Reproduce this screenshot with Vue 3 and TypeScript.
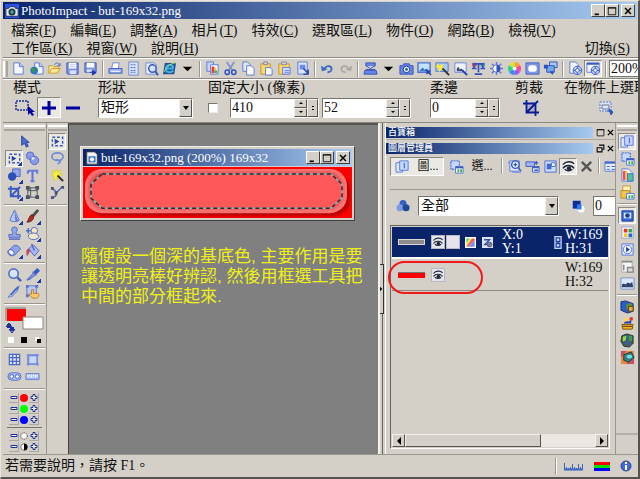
<script setup lang="ts">
import { ref } from 'vue'

interface Item { icon: string; label: string; pressed?: boolean }
interface MenuEntry { text: string; key: string }

const t = (icon: string, label: string, pressed = false): Item => ({ icon, label, pressed })

const menuTop: MenuEntry[] = [
  { text: '檔案', key: 'F' }, { text: '編輯', key: 'E' }, { text: '調整', key: 'A' },
  { text: '相片', key: 'T' }, { text: '特效', key: 'C' }, { text: '選取區', key: 'L' },
  { text: '物件', key: 'O' }, { text: '網路', key: 'B' }, { text: '檢視', key: 'V' },
]
const menuBottom: MenuEntry[] = [
  { text: '工作區', key: 'K' }, { text: '視窗', key: 'W' }, { text: '說明', key: 'H' },
]

const toolbar: Item[][] = [
  [t('page', 'New'), t('webpage', 'New web page'), t('open', 'Open'), t('save', 'Save'), t('saveas', 'Save as')],
  [t('print', 'Print'), t('sheet', 'Print preview'), t('preview', 'Preview'), t('browser', 'Browser'), t('down', 'Browser list')],
  [t('copyrgb', 'Copy image'), t('cut', 'Cut'), t('copy', 'Copy'), t('paste', 'Paste'), t('paste2', 'Paste special'), t('pasteimg', 'Paste image')],
  [t('undo', 'Undo'), t('redo', 'Redo')],
  [t('scan', 'Scanner'), t('down', 'Scanner list'), t('camera', 'Camera'), t('photo', 'Photo'), t('photofx', 'Photo effects'),
    t('histo', 'Levels'), t('balance', 'Balance'), t('bright', 'Brightness'), t('wheel', 'Hue'), t('frame', 'Frame'), t('batch', 'Batch')],
  [t('webdoc', 'Web document'), t('webwin', 'Web window', true)],
]

const toolGroups: Item[][] = [
  [t('marquee', 'Select', true), t('balls', 'Object'), t('shapes', 'Shapes'), t('type', 'Text'), t('crop', 'Crop'), t('transform', 'Transform')],
  [t('cone', 'Retouch'), t('brush', 'Paint'), t('stamp', 'Stamp'), t('clone', 'Clone'), t('eraser', 'Eraser'), t('bucket', 'Fill')],
  [t('lens', 'Zoom'), t('dropper', 'Eyedropper'), t('knife', 'Slice'), t('hand', 'Image map')],
]
const flyouts = ['marquee', 'shapes', 'crop', 'cone', 'brush', 'clone', 'eraser', 'bucket', 'dropper']
const viewTools: Item[] = [t('grid', 'Grid'), t('box', 'Bounds'), t('mask', 'Mask'), t('ruler', 'Ruler')]
const subTools: Item[] = [t('marquee', 'Standard selection', true), t('lasso', 'Lasso'), t('wand', 'Magic wand'), t('bezier', 'Bezier')]
const channels = ['red', 'green', 'blue']
const tones = ['sun', 'contrast']

const panelTools: Item[] = [t('docfind', 'Find'), t('objadd', 'Add'), t('objwin', 'Arrange'), t('eye', 'Show', true), t('cross', 'Delete')]
const strip: Item[][] = [
  [t('layers', 'Layers', true), t('selpanel', 'Selections'), t('colorpage', 'Channels'), t('lockpage', 'Documents')],
  [t('picpanel', 'Gallery', true), t('palette', 'Colors'), t('play', 'Quick commands'), t('textures', 'Info'), t('histogram', 'Histogram')],
  [t('lib', 'Library'), t('lamp', 'Genie'), t('globe', 'Material'), t('film', 'Effects')],
]

const width = ref('410')
const height = ref('52')
const soft = ref('0')
const zoom = ref('200%')
const opacity = ref('0')
const fixed = ref(false)
</script>

<template>
  <div class="app">
    <svg class="sprite" aria-hidden="true">
      <symbol id="page" viewBox="0 0 16 16"><path d="M3 2h6l4 4v8H3z" fill="#f4f7ff" stroke="#5a7ad8" /><path d="M9 2v4h4" fill="#b9c9f6" stroke="#5a7ad8" /></symbol>
      <symbol id="webpage" viewBox="0 0 16 16"><path d="M6 2h5l4 4v8H6z" fill="#f4f7ff" stroke="#5a7ad8" /><path d="M11 2v4h4" fill="#b9c9f6" stroke="#5a7ad8" /><circle cx="5.500" cy="10" r="4" fill="#2a70c8" /><path d="M2 9l3-2 2 2-2 4zM7 7l2 1v3z" fill="#36a040" /></symbol>
      <symbol id="open" viewBox="0 0 16 16"><path d="M2 13V5h4l1 1h5v3" fill="#f7e9a2" stroke="#c79a32" /><path d="M2 13l3-5h9l-3 5z" fill="#ffe58a" stroke="#c79a32" /><path d="M8 4c2-3 4-2 5 0M14 2v3h-3" fill="none" stroke="#3a66c8" /></symbol>
      <symbol id="save" viewBox="0 0 16 16"><path d="M2 2h12v12H3l-1-1z" fill="#7b93e4" stroke="#4158b8" /><path d="M4 2h8v6H4z" fill="#fff" /><path d="M5 4h6M5 6h6" stroke="#b8c4e8" /><path d="M5 10h7v4H5z" fill="#d9e0fa" /></symbol>
      <symbol id="saveas" viewBox="0 0 16 16"><path d="M2 2h12v10H2z" fill="#7b93e4" stroke="#4158b8" /><path d="M4 2h8v5H4z" fill="#fff" /><path d="M4 9h6v3H4z" fill="#d9e0fa" /><path d="M7 12h5M10 10l4 2.500-4 2.500z" fill="#2038b0" stroke="#2038b0" /></symbol>
      <symbol id="print" viewBox="0 0 16 16"><path d="M5 2h7l-1 6H4z" fill="#fff" stroke="#6c86dc" /><path d="M1 8h14v5H1z" fill="#9cb2f0" stroke="#3d5cc0" /><path d="M3 11h10" stroke="#fff" /></symbol>
      <symbol id="sheet" viewBox="0 0 16 16"><path d="M3 1h10v14H3z" fill="#dce5ff" stroke="#6c86dc" /><path d="M5 4h6M5 7h6M5 10h6M5 12h6" stroke="#3d5cc0" stroke-dasharray="2 1" /></symbol>
      <symbol id="preview" viewBox="0 0 16 16"><path d="M2 2h9l2 2v10H2z" fill="#eef2ff" stroke="#6c86dc" /><circle cx="9" cy="8" r="4" fill="#cfe4fb" stroke="#3558bd" stroke-width="1.500" /><path d="M12 11l3 4" stroke="#3558bd" stroke-width="2" /></symbol>
      <symbol id="browser" viewBox="0 0 16 16"><path d="M3 2h12l-2 12H1z" fill="#2a4a88" /><path d="M12 8H4c1-5 8-5 8 0M4 8c0 5 6 5 8 2" fill="none" stroke="#35b8f0" stroke-width="2" /><path d="M2 12C5 5 11 2 15 2" fill="none" stroke="#9fdc6c" /></symbol>
      <symbol id="down" viewBox="0 0 16 16"><path d="M3 6h10l-5 5z" fill="#000" /></symbol>
      <symbol id="copyrgb" viewBox="0 0 16 16"><path d="M2 1h7v10H2z" fill="#c9d7ff" stroke="#5a7ad8" /><path d="M6 4h8v10H6z" fill="#fff" stroke="#5a7ad8" /><path d="M7 6h3v7H7z" fill="#e83a3a" /><path d="M10 7h2v3h-2z" fill="#f0c430" /><path d="M10 10h3v3h-3z" fill="#40b050" /></symbol>
      <symbol id="cut" viewBox="0 0 16 16"><path d="M4 1l6 9M12 1L6 10" stroke="#8296c8" stroke-width="2" /><circle cx="4.500" cy="12" r="2.300" fill="none" stroke="#2d54c0" stroke-width="1.600" /><circle cx="11.500" cy="12" r="2.300" fill="none" stroke="#2d54c0" stroke-width="1.600" /></symbol>
      <symbol id="copy" viewBox="0 0 16 16"><path d="M2 1h5l3 3v7H2z" fill="#dfe8ff" stroke="#5a7ad8" /><path d="M6 5h5l3 3v7H6z" fill="#f7f9ff" stroke="#5a7ad8" /></symbol>
      <symbol id="paste" viewBox="0 0 16 16"><path d="M2 3h10v11H2z" fill="#ffd865" stroke="#c2932c" /><path d="M5 1h4v3H5z" fill="#d0d4e4" stroke="#8088a0" /><path d="M7 7h5l2 2v6H7z" fill="#f7f9ff" stroke="#5a7ad8" /></symbol>
      <symbol id="paste2" viewBox="0 0 16 16"><path d="M2 3h11v11H2z" fill="#ffd865" stroke="#c2932c" /><path d="M5 1h5v3H5z" fill="#d0d4e4" stroke="#8088a0" /><path d="M6 7h8v7H6z" fill="#dce5ff" stroke="#5a7ad8" /><path d="M8 10h5M8 12h5" stroke="#5a7ad8" /></symbol>
      <symbol id="pasteimg" viewBox="0 0 16 16"><path d="M3 1h10v13H3z" fill="#dce5ff" stroke="#5a7ad8" /><path d="M5 4h6v5H5z" fill="#6f8ce4" /><path d="M9 8l5 5M14 9v5H9" stroke="#2038b0" stroke-width="1.500" fill="none" /></symbol>
      <symbol id="undo" viewBox="0 0 16 16"><path d="M5 8c2-4 9-3 7 2-1 2-2 2-4 2" fill="none" stroke="#3b69c8" stroke-width="2" /><path d="M1 5l1 6 6-2z" fill="#3b69c8" /></symbol>
      <symbol id="redo" viewBox="0 0 16 16"><path d="M11 8c-2-4-9-3-7 2 1 2 2 2 4 2" fill="none" stroke="#aaa9a5" stroke-width="2" /><path d="M15 5l-1 6-6-2z" fill="#aaa9a5" /></symbol>
      <symbol id="scan" viewBox="0 0 16 16"><path d="M3 2h10v3H3zM2 10h12l1 4H1z" fill="#6687e8" stroke="#3450b8" /><path d="M3 5l5 3 5-3M3 9h10" stroke="#3450b8" fill="#c5d5ff" /></symbol>
      <symbol id="camera" viewBox="0 0 16 16"><path d="M1 5h3l1-2h6l1 2h3v9H1z" fill="#6687e8" stroke="#3450b8" /><circle cx="8" cy="9" r="3.500" fill="#e5f0ff" stroke="#203880" /><circle cx="8" cy="9" r="1.500" fill="#2d54c0" /></symbol>
      <symbol id="photo" viewBox="0 0 16 16"><path d="M1 2h13v10H1z" fill="#bfe2ff" stroke="#4e70d0" stroke-width="1.500" /><path d="M2 11l4-4 3 3 2-2 2 3z" fill="#3c78c8" /><path d="M9 9l6 6M10 14l4-4" stroke="#2038b0" stroke-width="1.500" /></symbol>
      <symbol id="photofx" viewBox="0 0 16 16"><path d="M1 2h13v9H1z" fill="#a5cbf7" stroke="#4e70d0" /><path d="M3 2l2 3 4-2-1 4 4 3-5-1-3 3V8L1 6z" fill="#ffe92e" /><path d="M8 8l7 7" stroke="#303040" stroke-width="2" /></symbol>
      <symbol id="histo" viewBox="0 0 16 16"><path d="M2 2h12v10H2z" fill="#eef2ff" stroke="#6c86dc" /><path d="M4 11V8l2-2 1 3 2-1 3 3z" fill="#3d4c70" /><path d="M10 10l5 5" stroke="#2038b0" stroke-width="2" /></symbol>
      <symbol id="balance" viewBox="0 0 16 16"><path d="M1 2h5v4H1z" fill="#e25268" /><path d="M10 2h5v4h-5z" fill="#3cb9a0" /><path d="M2 3h12M8 2v10M4 14h8M1 8h5M10 8h5M3 8l1-5M13 8l-1-5" stroke="#3450b8" stroke-width="1.800" /></symbol>
      <symbol id="bright" viewBox="0 0 16 16"><path d="M8 1v14M1 8h14M3 3l10 10M13 3L3 13" stroke="#5877da" stroke-width="1.500" /><circle cx="8" cy="8" r="4" fill="#f4f8ff" stroke="#5877da" /><path d="M8 4a4 4 0 0 1 0 8z" fill="#3450b8" /></symbol>
      <symbol id="wheel" viewBox="0 0 16 16"><path d="M8 8V1a7 7 0 0 1 6 3.500z" fill="#ff9b38" /><path d="M8 8l6-3.500a7 7 0 0 1 0 7z" fill="#f3469b" /><path d="M8 8l6 3.500A7 7 0 0 1 8 15z" fill="#9c5af0" /><path d="M8 8v7a7 7 0 0 1-6-3.500z" fill="#3a8cf5" /><path d="M8 8l-6 3.500a7 7 0 0 1 0-7z" fill="#2cd486" /><path d="M8 8L2 4.500A7 7 0 0 1 8 1z" fill="#c9e838" /><circle cx="8" cy="8" r="2" fill="#fff" /></symbol>
      <symbol id="frame" viewBox="0 0 16 16"><path d="M1 2h14v12H1z" fill="#7d97ea" stroke="#4561c5" /><rect x="3.500" y="4.500" width="9" height="7" rx="3" fill="#fff" /></symbol>
      <symbol id="batch" viewBox="0 0 16 16"><path d="M7 1h8v6H7z" fill="#a5cbf7" stroke="#3450b8" /><path d="M4 5h8v7H4z" fill="#70a8f0" stroke="#3450b8" /><path d="M1 4h4v4H1zM7 11h5l-2 4z" fill="#2850c0" /></symbol>
      <symbol id="webdoc" viewBox="0 0 16 16"><path d="M2 1h6l3 3v9H2z" fill="#f4f7ff" stroke="#5a7ad8" /><circle cx="10" cy="10" r="4.500" fill="#c5d5ff" stroke="#3d5cc0" /><circle cx="10" cy="10" r="2" fill="#fff" stroke="#3d5cc0" /><path d="M5.500 10H8M12 10h2.500M10 5.500V8M10 12v2.500" stroke="#3d5cc0" /></symbol>
      <symbol id="webwin" viewBox="0 0 16 16"><path d="M1 2h13v10H1z" fill="#f4f7ff" stroke="#5a7ad8" /><path d="M1 3h13" stroke="#3d5cc0" stroke-width="2" /><circle cx="10" cy="10" r="4.500" fill="#c5d5ff" stroke="#3d5cc0" /><circle cx="10" cy="10" r="2" fill="#fff" stroke="#3d5cc0" /><path d="M5.500 10H8M12 10h2.500M10 5.500V8M10 12v2.500" stroke="#3d5cc0" /></symbol>

      <symbol id="pointer" viewBox="0 0 16 16"><path d="M5 2v10l3-2 2 4 2-1-2-4h3z" fill="#4a6cd0" stroke="#27459c" /></symbol>
      <symbol id="marquee" viewBox="0 0 16 16"><path d="M2.500 3.500h11v9h-11z" fill="none" stroke="#3a58b8" stroke-width="1.500" stroke-dasharray="3 2" /><path d="M5 5l5 3-5 3z" fill="#27459c" /></symbol>
      <symbol id="balls" viewBox="0 0 16 16"><circle cx="5.500" cy="5" r="4" fill="#8a9ce8" stroke="#5166c4" /><circle cx="10" cy="10" r="4.500" fill="#8a9ce8" stroke="#5166c4" /><circle cx="8.500" cy="8" r="1.500" fill="#dfe5ff" /></symbol>
      <symbol id="shapes" viewBox="0 0 16 16"><path d="M6 1h8v8H6z" fill="#8fa4ec" stroke="#5166c4" /><circle cx="5.500" cy="9" r="4.500" fill="#2f4fb8" /></symbol>
      <symbol id="type" viewBox="0 0 16 16"><path d="M3 3h10v3M8 3v11M3 3v3M6 14h4" fill="none" stroke="#6079dc" stroke-width="2.200" /></symbol>
      <symbol id="crop" viewBox="0 0 16 16"><path d="M4 1v11h11M1 4h11v11M4 12l10-10" fill="none" stroke="#3a58c8" stroke-width="2" /></symbol>
      <symbol id="transform" viewBox="0 0 16 16"><path d="M3 3h10v10H3zM3 6h10M6 3v10" fill="none" stroke="#4b4f60" /><path d="M1 1h4v4H1zM11 1h4v4h-4zM1 11h4v4H1zM11 11h4v4h-4z" fill="#4b4f60" /></symbol>
      <symbol id="cone" viewBox="0 0 16 16"><path d="M8 1l5 11c-2 2-8 2-10 0z" fill="#b8c8f8" stroke="#5a73cc" /><path d="M8 3l1 10h3z" fill="#5c7bdc" /></symbol>
      <symbol id="brush" viewBox="0 0 16 16"><path d="M14 1L8 8" stroke="#505050" stroke-width="3" /><path d="M9 7c1 5-3 7-7 7 2-2 2-6 5-8z" fill="#a52f24" stroke="#641c18" /></symbol>
      <symbol id="stamp" viewBox="0 0 16 16"><path d="M5 4a3 3 0 0 1 6 0c0 2-2 2-1 5h4v3H2V9h4c1-3-1-3-1-5z" fill="#92a6ea" stroke="#5166c4" /><path d="M2 14h12" stroke="#5166c4" stroke-width="1.500" /></symbol>
      <symbol id="clone" viewBox="0 0 16 16"><circle cx="10" cy="5" r="3.500" fill="#f4e6c0" stroke="#5166c4" /><ellipse cx="9" cy="11" rx="5.500" ry="3.500" fill="#f1e8cc" stroke="#5166c4" /><path d="M1 5h5M3.500 2v6" stroke="#4c6bd0" stroke-width="1.500" /></symbol>
      <symbol id="eraser" viewBox="0 0 16 16"><path d="M1 9l6-6c3-2 8 2 7 4l-6 6c-3 2-8-1-7-4z" fill="#8fa4ec" stroke="#5166c4" /><ellipse cx="4.500" cy="10" rx="3.500" ry="2.500" fill="#f4f6ff" stroke="#5166c4" transform="rotate(40 4.500 10)" /></symbol>
      <symbol id="bucket" viewBox="0 0 16 16"><path d="M4 6l5-4 6 6-5 6z" fill="#a6b7f0" stroke="#5166c4" /><path d="M7 1l3 7" stroke="#5166c4" stroke-width="1.500" /><path d="M4 6c-3 0-3 4-2 8 2-1 2-5 4-5z" fill="#b5505c" /></symbol>
      <symbol id="lens" viewBox="0 0 16 16"><circle cx="7" cy="7" r="5" fill="#d4e5fb" stroke="#5a73cc" stroke-width="1.800" /><path d="M11 11l4 4" stroke="#4460c0" stroke-width="2.500" /></symbol>
      <symbol id="dropper" viewBox="0 0 16 16"><path d="M9 6l4-4 2 2-4 4" fill="#3a58c8" stroke="#3a58c8" stroke-width="1.500" /><path d="M8 5l4 4M9 7l-7 7 3-1 6-5" fill="#dbe6ff" stroke="#5a73cc" stroke-width="1.500" /></symbol>
      <symbol id="knife" viewBox="0 0 16 16"><path d="M8 6l6-5-3 7z" fill="#5a73cc" /><path d="M9 5L1 14c5 0 7-3 10-7z" fill="#dfe4f6" stroke="#5a73cc" /><path d="M12 3L4 12" stroke="#4b68c8" stroke-width="2" /></symbol>
      <symbol id="hand" viewBox="0 0 16 16"><path d="M2 2h10v10H2z" fill="#b9c8fa" stroke="#5a73cc" /><path d="M1 1h3v3H1zM11 1h3v3h-3zM1 11h3v3H1z" fill="#5a73cc" /><path d="M7 6h2v4h5c2 2 0 5-2 5H8l-4-4 2-1 1 1z" fill="#fac96a" stroke="#b87c2c" /></symbol>
      <symbol id="grid" viewBox="0 0 16 16"><path d="M2.500 2.500h11v11h-11zM6 2v12M10 2v12M2 6h12M2 10h12" fill="#dbe6ff" stroke="#4a66c8" stroke-width="1.300" /></symbol>
      <symbol id="box" viewBox="0 0 16 16"><path d="M4 4h9v9H4z" fill="#c7d7ff" stroke="#5a73cc" /><path d="M2 3h13M2 13h13M3 2v13M13 2v13" stroke="#6f88e0" stroke-width="1.300" /></symbol>
      <symbol id="mask" viewBox="0 0 16 16"><rect x="1" y="4" width="14" height="8" rx="4" fill="#a9baf2" stroke="#5a73cc" /><circle cx="5" cy="8" r="2" fill="#fff" stroke="#4560b8" /><circle cx="11" cy="8" r="2" fill="#fff" stroke="#4560b8" /></symbol>
      <symbol id="ruler" viewBox="0 0 16 16"><path d="M1 5h14v6H1z" fill="#b5c6fa" stroke="#5a73cc" /><path d="M3 6v3M5 6v2M7 6v3M9 6v2M11 6v3M13 6v2" stroke="#fff" /></symbol>
      <symbol id="lasso" viewBox="0 0 16 16"><ellipse cx="8" cy="6" rx="6" ry="4" fill="none" stroke="#7189d8" stroke-width="1.800" /><path d="M11 9c1 2-1 4-3 5M6 9l5 2" fill="none" stroke="#7189d8" stroke-width="1.600" /></symbol>
      <symbol id="wand" viewBox="0 0 16 16"><path d="M7 1l1 3 4-2-2 4 4 1-4 2 1 4-4-2-3 3V9L1 8l3-2-2-4 4 2z" fill="#f8ef35" stroke="#c8b830" stroke-width=".5" /><path d="M8 8l6 6" stroke="#282838" stroke-width="2" /></symbol>
      <symbol id="bezier" viewBox="0 0 16 16"><path d="M2 3l5 5 6-6M7 8c0 4-2 5-4 5" fill="none" stroke="#4b5dac" stroke-width="1.500" /><path d="M1 2h3v3H1zM12 1h3v3h-3zM5 7h3v3H5zM1 12h3v3H1z" fill="#4b5070" /></symbol>
      <symbol id="sun" viewBox="0 0 16 16"><circle cx="8" cy="8" r="7" fill="none" stroke="#555" stroke-width="2" stroke-dasharray="2 2.500" /><circle cx="8" cy="8" r="4.500" fill="#fff" /></symbol>
      <symbol id="contrast" viewBox="0 0 16 16"><circle cx="8" cy="8" r="6.500" fill="#fff" stroke="#000" /><path d="M8 1a7 7 0 0 1 0 14z" fill="#000" /></symbol>

      <symbol id="layers" viewBox="0 0 16 16"><path d="M1 4h7v10H1z" fill="#dce8ff" stroke="#5a78d8" /><path d="M5 2h9v10H5z" fill="#c6d8ff" stroke="#5a78d8" /><path d="M10 4v6" stroke="#5a78d8" stroke-width="1.500" /></symbol>
      <symbol id="selpanel" viewBox="0 0 16 16"><path d="M2 2h9v9H2z" fill="#c6d8ff" stroke="#5a78d8" stroke-width="1.500" stroke-dasharray="2 1" /><path d="M7 8h8v7H7z" fill="#fff" stroke="#5078d0" /><path d="M7 9h8" stroke="#3d5cc0" stroke-width="2" /><path d="M9 11h2v3H9zM12 11h2v3h-2z" fill="#3dae58" /></symbol>
      <symbol id="docfind" viewBox="0 0 16 16"><path d="M1 4h5v10h9" fill="#dce8ff" stroke="#5a78d8" /><path d="M3 2h10v11H3z" fill="#dce8ff" stroke="#5a78d8" /><circle cx="9" cy="6" r="4" fill="#e9f2ff" stroke="#3558bd" stroke-width="1.500" /><path d="M12 9l3 4M7 6h4M9 4v4" stroke="#3558bd" stroke-width="1.500" /></symbol>
      <symbol id="objadd" viewBox="0 0 16 16"><path d="M1 3h9v5H1z" fill="#9db2f2" stroke="#4560c0" /><path d="M8 8h7v6H8z" fill="#dce8ff" stroke="#4560c0" /><path d="M8 9h7M12 2v4M10 4h4M10 12h4" stroke="#3d5cc0" stroke-width="1.500" /></symbol>
      <symbol id="objwin" viewBox="0 0 16 16"><path d="M2 2h12v12H2z" fill="#cdddfd" stroke="#4f6dcf" /><path d="M4 5h5v6H4z" fill="#426bd2" /><path d="M9 4h4v4H9z" fill="#fff" stroke="#426bd2" /></symbol>
      <symbol id="eye" viewBox="0 0 16 16"><path d="M2 6c3-4 9-4 12-1M2 10c3-4 9-4 12 0M4 11c2 2 6 2 8 0" fill="none" stroke="#20283c" stroke-width="1.600" /><circle cx="8.500" cy="10" r="2.300" fill="#20283c" /></symbol>
      <symbol id="cross" viewBox="0 0 16 16"><path d="M3 3l10 10M13 3L3 13" stroke="#555" stroke-width="2.500" /></symbol>
      <symbol id="propwin" viewBox="0 0 16 16"><path d="M1 3h14v10H1z" fill="#e5edff" stroke="#5a78d8" /><path d="M1 4h14" stroke="#3d65d0" stroke-width="2" /><path d="M3 8h3M3 11h3M8 8h5M8 11h5" stroke="#3d65d0" /></symbol>
      <symbol id="blend" viewBox="0 0 16 16"><circle cx="8" cy="5" r="4" fill="#3560c8" /><circle cx="4.500" cy="10" r="4" fill="#7f9be0" /><circle cx="11.500" cy="10" r="4" fill="#214894" /></symbol>
      <symbol id="opac" viewBox="0 0 16 16"><circle cx="11.500" cy="11.500" r="4" fill="#fff" /><path d="M2 2h9v9H2z" fill="#0b2d9c" /><path d="M7 6h5v6H7z" fill="#2b7cf0" /></symbol>
      <symbol id="colorpage" viewBox="0 0 16 16"><path d="M2 1h7l4 4v9H2z" fill="#fff" stroke="#5a78d8" /><path d="M3 3h3v10H3z" fill="#f05050" /><path d="M6 3h2v10H6z" fill="#f4d43c" /><path d="M8 6h6v8H8z" fill="#50c0a0" stroke="#4070d0" /></symbol>
      <symbol id="lockpage" viewBox="0 0 16 16"><path d="M3 1h8v8H3z" fill="#fff1b8" stroke="#c89830" /><path d="M1 6h9v8H1z" fill="#f2c64e" stroke="#b88828" /><path d="M7 9h8v6H7z" fill="#fff" stroke="#5078d0" /><path d="M9 11h2v3H9zM12 11h2v3h-2z" fill="#3dae58" /></symbol>
      <symbol id="picpanel" viewBox="0 0 16 16"><path d="M2 3h12v11H2z" fill="#3869d8" stroke="#1e3d98" /><path d="M4 5h8v6H4z" fill="#d6ecff" /><circle cx="8" cy="8" r="2.500" fill="#1e3d98" /></symbol>
      <symbol id="palette" viewBox="0 0 16 16"><path d="M2 2h12v12H2z" fill="#fff" stroke="#8fa0d0" /><path d="M4 4h4v4H4z" fill="#e63628" /><path d="M9 4h4v4H9z" fill="#38a848" /><path d="M4 9h4v4H4z" fill="#f4c62c" /><path d="M9 9h4v4H9z" fill="#2a62d8" /></symbol>
      <symbol id="play" viewBox="0 0 16 16"><path d="M2 2h12v12H2z" fill="#dce8ff" stroke="#5a78d8" /><circle cx="8" cy="8" r="4.500" fill="#f5f8ff" stroke="#5a78d8" /><path d="M6.500 5l4 3-4 3z" fill="#1e3d98" /></symbol>
      <symbol id="textures" viewBox="0 0 16 16"><path d="M2 2h11v12H2z" fill="#f5f5f3" stroke="#aaa" /><path d="M2 3h11M8 9h6v5H8zM4 6v6" fill="#ddd" stroke="#888" stroke-width="1.500" /></symbol>
      <symbol id="histogram" viewBox="0 0 16 16"><path d="M1 2h14v12H1z" fill="#dce8ff" stroke="#7a8ec8" /><path d="M2 12V9l2-1 2 1 2-2 3 1 2-2 1 6z" fill="#30426e" /></symbol>
      <symbol id="lib" viewBox="0 0 16 16"><path d="M1 3l5-1 8 3v8l-6 2-7-3z" fill="#2d5dc0" stroke="#1a2f78" /><circle cx="10" cy="8" r="3.500" fill="#5b8f40" /><path d="M9 8h5v5H9z" fill="#e2b23a" stroke="#604010" /></symbol>
      <symbol id="lamp" viewBox="0 0 16 16"><path d="M2 9h12l-1 5H3z" fill="#f0b52a" stroke="#80500c" /><path d="M4 8l2-4 3 2 3-2v4z" fill="#2c3fa8" /><circle cx="12" cy="3" r="2" fill="#e83828" /><circle cx="6" cy="4" r="2.200" fill="#ffd850" /><path d="M3 11h10" stroke="#503008" /></symbol>
      <symbol id="globe" viewBox="0 0 16 16"><path d="M2 3l5-2 7 2v8l-4 4-6-1-3-5z" fill="#47604c" stroke="#273040" /><path d="M3 4l4-1-1 5-3 1z" fill="#8ce03c" /><path d="M9 3h4v5l-3 1z" fill="#3ea04a" /><path d="M8 9V3M8 9l4 4M8 9l-4 3" stroke="#3858c8" stroke-width="1.500" /></symbol>
      <symbol id="film" viewBox="0 0 16 16"><path d="M1 1h14v14H1z" fill="#e98a36" /><path d="M1 1h6L1 8zM15 15H6l9-6z" fill="#c84e64" /><path d="M4 5l8-3 3 6-6 5-5-2z" fill="#367c80" stroke="#203840" /><ellipse cx="10" cy="7" rx="3" ry="2" fill="#68e4e4" /></symbol>
      <symbol id="rainbow" viewBox="0 0 16 16"><path d="M0 0h16v16H0z" fill="#fff" /><path d="M2 2h5L2 9z" fill="#58d070" /><path d="M2 9l5-7h3L2 14z" fill="#f5e83c" /><path d="M10 2h4v3l-9 9H2z" fill="#ee6068" /><path d="M14 5v9H5z" fill="#788cf0" /></symbol>
      <symbol id="pen" viewBox="0 0 16 16"><path d="M0 0h16v16H0z" fill="#dde5fa" /><path d="M3 4h8L4 11h4" fill="none" stroke="#3450a8" stroke-width="2" /><circle cx="11" cy="11" r="3.500" fill="#8a90a8" stroke="#303858" /><path d="M9 13l4-4" stroke="#303858" /></symbol>
      <symbol id="link" viewBox="0 0 8 14"><path d="M0 0h8v14H0z" fill="#c7d7ff" /><path d="M2 2h4v4H2zM2 8h4v4H2zM4 5v4" fill="none" stroke="#1e3d98" stroke-width="1.300" /></symbol>
      <symbol id="logo" viewBox="0 0 16 16"><path d="M0 0h16v16H0z" fill="#2a55e8" /><path d="M1 5h3l2-2h5l1 2h3v9H1z" fill="#e8e8e8" stroke="#202840" /><circle cx="8" cy="9" r="4" fill="#1b3a48" /><circle cx="8" cy="9" r="2" fill="#3cb0a8" /></symbol>
      <symbol id="docicon" viewBox="0 0 16 16"><path d="M2 1h9l3 3v11H2z" fill="#f4f4f4" stroke="#444" /><path d="M4 6h8v7H4z" fill="#2f6fc0" /><circle cx="8" cy="9.500" r="2.500" fill="#e8f4ff" /></symbol>
      <symbol id="min" viewBox="0 0 12 12"><path d="M2 9h5v2H2z" fill="#000" /></symbol>
      <symbol id="max" viewBox="0 0 12 12"><path d="M1.500 2h9v8.500h-9zM1 2.500h10" fill="none" stroke="#000" /></symbol>
      <symbol id="close" viewBox="0 0 12 12"><path d="M2.500 2.500l7 7M9.500 2.500l-7 7" stroke="#000" stroke-width="1.800" /></symbol>
      <symbol id="restore" viewBox="0 0 12 12"><path d="M4 1.500h6.500V7H8M1.500 5H8v5.500H1.500z" fill="none" stroke="#000" stroke-width="1.400" /></symbol>
    </svg>

    <header class="titlebar">
      <svg class="i14"><use href="#logo" /></svg>
      <h1>PhotoImpact - but-169x32.png</h1>
      <div class="winbtns">
        <button aria-label="Minimize"><svg><use href="#min" /></svg></button>
        <button aria-label="Maximize"><svg><use href="#max" /></svg></button>
        <button class="last" aria-label="Close"><svg><use href="#close" /></svg></button>
      </div>
    </header>

    <nav class="menu">
      <div class="menurow">
        <a v-for="m in menuTop" :key="m.key" href="#">{{ m.text }}(<u>{{ m.key }}</u>)</a>
      </div>
      <div class="menurow">
        <a v-for="m in menuBottom" :key="m.key" href="#">{{ m.text }}(<u>{{ m.key }}</u>)</a>
        <a class="right" href="#">切換(<u>S</u>)</a>
      </div>
    </nav>

    <div class="toolbar">
      <i class="grip" />
      <template v-for="(g, gi) in toolbar" :key="gi">
        <button v-for="(b, bi) in g" :key="bi" class="tb" :class="{ pressed: b.pressed }" :aria-label="b.label">
          <svg><use :href="'#' + b.icon" /></svg>
        </button>
        <i class="vsep" />
      </template>
      <input v-model="zoom" class="zoom" aria-label="Zoom">
    </div>

    <div class="options">
      <section class="mode">
        <span class="lab">模式</span>
        <div class="ctl">
          <button class="modebtn" aria-label="New selection">
            <svg viewBox="0 0 22 18"><path d="M2 2h12v9H2z" fill="none" stroke="#1a2f98" stroke-width="1.500" stroke-dasharray="2 1" /><path d="M14 7v9l2-2 2 3 2-1-2-3h3z" fill="#0000a0" /></svg>
          </button>
          <button class="modebtn pressed" aria-label="Add"><svg viewBox="0 0 22 18"><path d="M4 9h14M11 2v14" stroke="#0000a0" stroke-width="3" /></svg></button>
          <button class="modebtn" aria-label="Subtract"><svg viewBox="0 0 22 18"><path d="M4 9h14" stroke="#0000a0" stroke-width="3" /></svg></button>
        </div>
      </section>
      <section class="shape">
        <label class="lab" for="shape">形狀</label>
        <div class="ctl">
          <div class="combo">
            <select id="shape"><option>矩形</option></select>
            <span class="drop"><svg viewBox="0 0 8 8"><path d="M1 2h6L4 6z" /></svg></span>
          </div>
        </div>
      </section>
      <section class="size">
        <label class="lab" for="fixed">固定大小 (像素)</label>
        <div class="ctl">
          <input id="fixed" v-model="fixed" type="checkbox">
          <div class="spin">
            <input v-model="width" aria-label="Width">
            <span class="ud"><button aria-label="Up"><svg viewBox="0 0 8 6"><path d="M2 4h4L4 2z" /></svg></button><button aria-label="Down"><svg viewBox="0 0 8 6"><path d="M2 2h4L4 4z" /></svg></button></span>
            <button class="more" aria-label="Slider"><svg viewBox="0 0 8 12"><path d="M3 4h2v1H3zM3 7h2v1H3z" /></svg></button>
          </div>
          <div class="spin">
            <input v-model="height" aria-label="Height">
            <span class="ud"><button aria-label="Up"><svg viewBox="0 0 8 6"><path d="M2 4h4L4 2z" /></svg></button><button aria-label="Down"><svg viewBox="0 0 8 6"><path d="M2 2h4L4 4z" /></svg></button></span>
            <button class="more" aria-label="Slider"><svg viewBox="0 0 8 12"><path d="M3 4h2v1H3zM3 7h2v1H3z" /></svg></button>
          </div>
        </div>
      </section>
      <section class="soft">
        <label class="lab" for="soft">柔邊</label>
        <div class="ctl">
          <div class="spin">
            <input id="soft" v-model="soft">
            <span class="ud"><button aria-label="Up"><svg viewBox="0 0 8 6"><path d="M2 4h4L4 2z" /></svg></button><button aria-label="Down"><svg viewBox="0 0 8 6"><path d="M2 2h4L4 4z" /></svg></button></span>
            <button class="more" aria-label="Slider"><svg viewBox="0 0 8 12"><path d="M3 4h2v1H3zM3 7h2v1H3z" /></svg></button>
          </div>
        </div>
      </section>
      <section class="trim">
        <span class="lab">剪裁</span>
        <div class="ctl center">
          <button class="plain" aria-label="Crop"><svg viewBox="0 0 16 16"><path d="M4 4h8v8H4z" fill="#b4b4bc" /><path d="M3.500 0v12.500H16M0 3.500h12.500V16M3 13L15 1" fill="none" stroke="#0a1a98" stroke-width="1.800" /></svg></button>
        </div>
      </section>
      <section class="onobj">
        <span class="lab">在物件上選取</span>
        <div class="ctl center">
          <button class="plain" aria-label="Select on object"><svg viewBox="0 0 16 16"><path d="M2 2h11v9H2z" fill="#dce5ff" stroke="#5a78d8" stroke-dasharray="2 1" /><path d="M4 5h7v4H4z" fill="none" stroke="#777" /><path d="M9 11h4M11 9l4 3-2 3z" fill="#2d54c0" stroke="#2d54c0" /></svg></button>
        </div>
      </section>
    </div>

    <main class="work">
      <aside class="tools">
        <i class="hgrip" />
        <div class="single"><button class="tb" aria-label="Pick"><svg><use href="#pointer" /></svg></button></div>
        <template v-for="(g, gi) in toolGroups" :key="gi">
          <div class="pair">
            <button v-for="b in g" :key="b.icon" class="tb" :class="{ pressed: b.pressed, fly: flyouts.includes(b.icon) }" :aria-label="b.label"><svg><use :href="'#' + b.icon" /></svg></button>
          </div>
          <i class="hsep" />
        </template>
        <svg class="colors" viewBox="0 0 43 37">
          <path d="M4 2h19v12H4z" fill="#f00" /><path d="M3 14V1h20" fill="none" stroke="#777" />
          <path d="M20 10h20v12H20z" fill="#fff" stroke="#8a8780" />
          <path d="M4 17h4v4H4zM7 20h4v4H7z" fill="#1a2f98" /><path d="M3 20l3-4 3 4M6 22l3 4 3-4" fill="none" stroke="#1a2f98" />
          <path d="M5 30h6v6H5z" fill="#fff" /><path d="M18 30h6v6h-6z" fill="#000" /><path d="M32 30h4v4h-4z" fill="#fff" /><path d="M34 32h4v4h-4z" fill="#000" />
        </svg>
        <i class="hsep" />
        <div class="pair">
          <button v-for="b in viewTools" :key="b.icon" class="tb" :aria-label="b.label"><svg><use :href="'#' + b.icon" /></svg></button>
        </div>
        <i class="hsep" />
        <div v-for="c in channels" :key="c" class="chan">
          <button :aria-label="c + ' down'"><svg viewBox="0 0 10 9"><path d="M2 3.500h6v2H2z" fill="#fff" stroke="#1a2f98" /></svg></button>
          <span class="dot" :class="c" />
          <button :aria-label="c + ' up'"><svg viewBox="0 0 10 9"><path d="M4 1.500h2v2h2v2H6v2H4v-2H2v-2h2z" fill="#fff" stroke="#1a2f98" /></svg></button>
        </div>
        <i class="thin" />
        <div v-for="c in tones" :key="c" class="chan">
          <button :aria-label="c + ' down'"><svg viewBox="0 0 10 9"><path d="M2 3.500h6v2H2z" fill="#fff" stroke="#1a2f98" /></svg></button>
          <svg class="dot"><use :href="'#' + c" /></svg>
          <button :aria-label="c + ' up'"><svg viewBox="0 0 10 9"><path d="M4 1.500h2v2h2v2H6v2H4v-2H2v-2h2z" fill="#fff" stroke="#1a2f98" /></svg></button>
        </div>
      </aside>

      <aside class="sub">
        <i class="hgrip" />
        <button v-for="b in subTools" :key="b.icon" class="tb" :class="{ pressed: b.pressed }" :aria-label="b.label"><svg><use :href="'#' + b.icon" /></svg></button>
        <i class="hsep" />
      </aside>

      <div class="canvas">
        <div class="doc">
          <div class="titlebar doctitle">
            <svg class="i14"><use href="#docicon" /></svg>
            <h2>but-169x32.png (200%) 169x32</h2>
            <div class="winbtns">
              <button aria-label="Minimize"><svg><use href="#min" /></svg></button>
              <button aria-label="Maximize"><svg><use href="#max" /></svg></button>
              <button class="last" aria-label="Close"><svg><use href="#close" /></svg></button>
            </div>
          </div>
          <svg class="image" viewBox="0 0 268 51">
            <defs><filter id="soften"><feGaussianBlur stdDeviation="1.500" /></filter></defs>
            <path d="M0 0h268v51H0z" fill="#f00" />
            <rect x="6" y="6" width="260" height="43" rx="17" fill="#b80000" filter="url(#soften)" />
            <rect x="2" y="2" width="261" height="44" rx="17" fill="#ff7474" />
            <rect x="6" y="5" width="253" height="37" rx="15" fill="#e04848" filter="url(#soften)" />
            <path d="M19 7h228l11 10v14l-11 10H19L8 31V17z" fill="#ff5858" stroke="#70c0c0" stroke-width="1.500" />
            <path d="M19 7h228l11 10v14l-11 10H19L8 31V17z" fill="none" stroke="#501818" stroke-width="1.500" stroke-dasharray="4 3" />
          </svg>
        </div>
        <p class="note">隨便設一個深的基底色, 主要作用是要<br>讓透明亮棒好辨認, 然後用框選工具把<br>中間的部分框起來.</p>
      </div>

      <div class="split"><button aria-label="Collapse"><svg viewBox="0 0 4 8"><path d="M0 1v6l3-3z" /></svg></button></div>

      <div class="panel">
        <div class="phead"><b>百寶箱</b><button aria-label="Maximize"><svg><use href="#max" /></svg></button><button aria-label="Close"><svg><use href="#close" /></svg></button></div>
        <div class="phead second"><b>圖層管理員</b><button aria-label="Restore"><svg><use href="#restore" /></svg></button><button aria-label="Close"><svg><use href="#close" /></svg></button></div>
        <div class="tabs">
          <button class="tab pressed"><svg><use href="#layers" /></svg>圖...</button>
          <button class="tab"><svg><use href="#selpanel" /></svg>選...</button>
          <i class="vsep" />
          <button v-for="b in panelTools" :key="b.icon" class="tb" :class="{ pressed: b.pressed }" :aria-label="b.label"><svg><use :href="'#' + b.icon" /></svg></button>
          <i class="vsep" />
          <button class="tb" aria-label="Properties"><svg><use href="#propwin" /></svg></button>
        </div>
        <div class="filter">
          <svg class="i14"><use href="#blend" /></svg>
          <div class="combo">
            <select aria-label="Blend"><option>全部</option></select>
            <span class="drop"><svg viewBox="0 0 8 8"><path d="M1 2h6L4 6z" /></svg></span>
          </div>
          <svg class="i14"><use href="#opac" /></svg>
          <input v-model="opacity" aria-label="Opacity">
        </div>
        <div class="list">
          <div class="row sel">
            <span class="thumb gray" />
            <button class="mini" aria-label="Visible"><svg><use href="#eye" /></svg></button>
            <span class="mini" />
            <svg class="mini2"><use href="#rainbow" /></svg>
            <svg class="mini2"><use href="#pen" /></svg>
            <span class="pos">X:0<br>Y:1</span>
            <svg class="link"><use href="#link" /></svg>
            <span class="dim">W:169<br>H:31</span>
          </div>
          <div class="row base">
            <span class="thumb" />
            <button class="mini" aria-label="Visible"><svg><use href="#eye" /></svg></button>
            <span class="dim">W:169<br>H:32</span>
          </div>
          <div class="fill" />
          <div class="scroll">
            <button aria-label="Left"><svg viewBox="0 0 8 8"><path d="M6 0v8L2 4z" /></svg></button>
            <span class="thumbbar" />
            <span class="track" />
            <button aria-label="Right"><svg viewBox="0 0 8 8"><path d="M2 0v8l4-4z" /></svg></button>
          </div>
          <span class="ring" />
        </div>
      </div>

      <aside class="strip">
        <i class="hgrip" />
        <template v-for="(g, gi) in strip" :key="gi">
          <button v-for="b in g" :key="b.icon" class="tb" :class="{ pressed: b.pressed }" :aria-label="b.label"><svg><use :href="'#' + b.icon" /></svg></button>
          <i v-if="gi < 2" class="hsep" />
        </template>
        <i class="endline" />
      </aside>
    </main>

    <footer class="status">
      <span>若需要說明，請按 F1。</span>
      <i class="vsep" />
      <svg class="s-ruler" viewBox="0 0 19 10"><path d="M0 8.500h19" stroke="#3866c0" stroke-width="2" /><path d="M.5 2v7M2.500 6v3M4.500 7v2M6.500 6v3M8.500 3v6M10.500 6v3M12.500 7v2M14.500 3v6M16.500 6v3M18.500 3v6" stroke="#3866c0" /></svg>
      <svg class="s-rgb" viewBox="0 0 16 9"><path d="M0 0h16v3H0z" fill="#f00" /><path d="M0 3h16v3H0z" fill="#0d0" /><path d="M0 6h16v3H0z" fill="#00f" /></svg>
      <svg class="s-info" viewBox="0 0 12 12"><circle cx="6" cy="6" r="5" fill="#4768d0" stroke="#2a46a4" /><path d="M5 2h2v2H5zM5 5h2v5H5z" fill="#fff" /></svg>
    </footer>
  </div>
</template>

<style>
body {
  margin: 0;
  background: #d4d0c8;
}
</style>

<style scoped>
.app {
  box-sizing: border-box;
  display: flex;
  flex-direction: column;
  min-height: 100vh;
  overflow: hidden;
  padding: 1px 0 0 2px;
  border: 1px solid #e8e5de;
  border-right: 2px solid #55534f;
  border-bottom: 2px solid #55534f;
  background: #d4d0c8;
  color: #101010;
  font: 400 14px/18px "Liberation Serif", "Noto Sans CJK TC", serif;
}
.app * { box-sizing: border-box; }
.sprite { display: none; }
svg { display: block; flex: none; }
i { display: block; flex: none; }
button {
  display: flex;
  align-items: center;
  justify-content: center;
  padding: 0;
  border: 0;
  background: none;
  font: inherit;
  color: inherit;
}
input, select {
  margin: 0;
  padding: 0;
  border: 0;
  border-radius: 0;
  background: #fff;
  font: inherit;
  color: inherit;
}
.i14 { width: 14px; height: 14px; }

.titlebar {
  display: flex;
  align-items: center;
  gap: 2px;
  height: 17px;
  padding: 0 2px;
  margin-right: 1px;
  background: linear-gradient(90deg, #0a246a, #a6caf0);
  color: #fff;
}
h1, h2 {
  flex: 1;
  margin: 0;
  font-size: 13px;
  line-height: 16px;
  font-weight: 400;
  white-space: nowrap;
}
.winbtns { display: flex; }
.winbtns button {
  width: 14px;
  height: 13px;
  background: #d4d0c8;
  border: 1px solid #fff;
  border-right-color: #404040;
  border-bottom-color: #404040;
}
.winbtns svg { width: 10px; height: 10px; }
.winbtns .last { margin-left: 2px; }

.menu {
  padding: 2px 8px 0;
  border-bottom: 1px solid #8c8982;
  height: 39px;
}
.menurow { display: flex; gap: 14px; height: 18px; line-height: 20px; }
.menu a { color: inherit; text-decoration: none; white-space: nowrap; }
.menu .right { margin-left: auto; }

.toolbar {
  display: flex;
  align-items: center;
  height: 21px;
  border-top: 1px solid #fff;
  border-bottom: 1px solid #8c8982;
  overflow: hidden;
}
.grip {
  width: 5px;
  height: 16px;
  margin-right: 1px;
  border-left: 2px solid #fff;
  border-right: 2px solid #a8a59e;
}
.tb { width: 18px; height: 17px; flex: none; }
.tb svg { width: 15px; height: 15px; }
.pressed {
  background: #ebe9e4;
  border: 1px solid #8c8982;
  border-right-color: #fff;
  border-bottom-color: #fff;
}
.vsep {
  width: 2px;
  height: 16px;
  margin: 0 2px 0 3px;
  border-left: 1px solid #9a978f;
  border-right: 1px solid #fff;
}
.zoom { flex: 1; min-width: 0; height: 17px; padding-left: 1px; border: 1px solid #777; border-right: 0; }

.options {
  display: flex;
  gap: 15px;
  height: 44px;
  padding-left: 10px;
  overflow: hidden;
  border-top: 1px solid #fff;
  border-bottom: 1px solid #8c8982;
}
.options section { flex: none; }
.lab { display: block; height: 17px; line-height: 15px; white-space: nowrap; }
.ctl { display: flex; align-items: center; height: 21px; }
.center { justify-content: center; }
.mode { width: 70px; }
.modebtn { width: 24px; height: 21px; flex: none; }
.modebtn svg { width: 22px; height: 18px; }
.shape { width: 95px; }
.size { width: 207px; }
.size .spin { margin-right: 3px; }
.soft .spin { width: 70px; }
.trim { width: 34px; }
.trim .ctl { width: 32px; }
.plain svg { width: 16px; height: 16px; }
input[type="checkbox"] {
  appearance: none;
  width: 10px;
  height: 10px;
  margin-right: 12px;
  border: 1px solid #77746e;
  border-right-color: #eee;
  border-bottom-color: #eee;
}
.combo, .spin {
  display: flex;
  height: 20px;
  border: 1px solid #77746e;
  border-right-color: #fff;
  border-bottom-color: #fff;
  background: #fff;
}
.combo { width: 100%; }
.combo select { flex: 1; min-width: 0; padding-left: 2px; appearance: none; }
.drop, .ud button, .more, .scroll button, .thumbbar {
  background: #d4d0c8;
  border: 1px solid #f4f2ee;
  border-right-color: #55534f;
  border-bottom-color: #55534f;
}
.drop { display: flex; align-items: center; justify-content: center; width: 13px; }
.drop svg { width: 8px; height: 8px; }
.spin { width: 89px; }
.spin input { flex: 1; min-width: 0; padding-left: 1px; }
.ud { display: flex; flex-direction: column; width: 13px; }
.ud button { flex: 1; min-height: 0; }
.ud svg { width: 8px; height: 6px; }
.more { width: 11px; }
.more svg { width: 8px; height: 12px; }

.work { display: flex; flex: 1; min-height: 0; }
.tools {
  width: 44px;
  flex: none;
  padding-top: 2px;
  border-right: 1px solid #9a978f;
}
.hgrip {
  height: 6px;
  margin: 0 1px 2px;
  border-top: 2px solid #fff;
  border-bottom: 2px solid #a8a59e;
}
.single { display: flex; justify-content: center; }
.pair {
  display: grid;
  grid-template-columns: 18px 18px;
  padding-left: 2px;
}
.fly { background: linear-gradient(135deg, transparent 86%, #2038a0 86%); }
.pressed.fly { background: linear-gradient(135deg, #ebe9e4 86%, #2038a0 86%); }
.hsep {
  height: 2px;
  margin: 3px 1px 2px;
  border-top: 1px solid #9a978f;
  border-bottom: 1px solid #fff;
}
.colors { width: 43px; height: 37px; }
.thin { height: 1px; margin: 2px 4px; background: #77746e; }
.chan { display: flex; align-items: center; height: 11px; padding-left: 6px; }
.chan button {
  width: 10px;
  height: 10px;
  border-right: 1px solid #aaa79f;
  border-bottom: 1px solid #aaa79f;
}
.chan button svg { width: 10px; height: 9px; }
.dot { width: 8px; height: 8px; margin: 0 1px; border-radius: 4px; }
.red { background: #f00; }
.green { background: #0f0; }
.blue { background: #00f; }
.sub { width: 21px; flex: none; padding-top: 2px; }
.sub .tb { margin-left: 1px; }

.canvas {
  flex: 1;
  min-width: 0;
  padding: 21px 23px 0 11px;
  border-top: 2px solid #55534f;
  border-left: 1px solid #404040;
  background: #808080;
}
.doc {
  padding: 2px;
  background: #d4d0c8;
  border: 1px solid #f0eee8;
  border-right-color: #404040;
  border-bottom-color: #404040;
}
.doctitle { margin: 0 0 1px; }
.image { width: 100%; height: auto; }
.note {
  margin: 26px -20px 0 1px;
  color: #f0f018;
  font: 400 17px/20px "Liberation Sans", "Noto Sans CJK TC", sans-serif;
  white-space: nowrap;
}

.split {
  display: flex;
  align-items: center;
  width: 7px;
  flex: none;
  border-left: 2px solid #f5f3ef;
  background: linear-gradient(90deg, #d4d0c8 2px, #66645f 2px, #66645f 3px, #d4d0c8 3px);
}
.split button {
  width: 4px;
  height: 50px;
  background: #d4d0c8;
  border: 1px solid #333;
  border-left: 0;
}
.split svg { width: 3px; height: 6px; }

.panel {
  display: flex;
  flex-direction: column;
  width: 231px;
  flex: none;
  overflow: hidden;
  border-left: 1px solid #fff;
  border-right: 1px solid #9a978f;
  padding-top: 3px;
}
.phead {
  display: flex;
  align-items: center;
  height: 14px;
  border-bottom: 1px solid #aaa79f;
  margin-bottom: 1px;
}
.phead b {
  flex: 1;
  height: 11px;
  margin-right: 2px;
  padding-left: 2px;
  font-size: 9px;
  line-height: 10px;
  font-weight: 500;
  color: #fff;
  background: linear-gradient(90deg, #0a246a, #a6caf0);
}
.phead button { width: 10px; height: 10px; }
.phead svg { width: 9px; height: 9px; }
.phead.second { border: 0; }
.tabs {
  display: flex;
  align-items: center;
  height: 34px;
  margin: 0 0 0 4px;
  padding-bottom: 13px;
  border-bottom: 1px solid #9a978f;
}
.tab { gap: 7px; width: 54px; height: 19px; font-size: 12px; flex: none; }
.tab svg { width: 15px; height: 15px; }
.filter { display: flex; align-items: center; gap: 12px; height: 32px; padding-left: 10px; }
.filter .i14 { margin-right: -4px; }
.filter .combo { width: 141px; flex: none; }
.filter input { width: 30px; height: 20px; flex: none; padding-left: 1px; border: 1px solid #77746e; }
.list {
  position: relative;
  display: flex;
  flex-direction: column;
  flex: 1;
  margin: 3px 5px 5px 4px;
  border: 1px solid #66645f;
  border-right-color: #fff;
  border-bottom-color: #fff;
  padding: 1px;
}
.row {
  display: flex;
  align-items: center;
  gap: 3px;
  height: 32px;
  padding: 0 4px 0 6px;
  line-height: 14px;
  border-bottom: 1px solid #8c8982;
}
.sel { background: #0a246a; color: #fff; border-bottom: 2px solid #fff; }
.thumb {
  width: 27px;
  height: 6px;
  margin-right: 4px;
  background: #f00;
  border-top: 1px solid #777;
}
.gray { background: #8c8c8c; border: 1px solid #d8d8d8; }
.mini {
  width: 12px;
  height: 12px;
  flex: none;
  background: #e4e4ea;
  outline: 1px solid #b8b8c0;
}
.mini svg { width: 12px; height: 12px; }
.mini2 { width: 11px; height: 11px; margin-left: 3px; }
.pos { margin: 0 auto 0 6px; }
.link { width: 8px; height: 13px; }
.dim { width: 39px; flex: none; }
.base .dim { margin-left: auto; }
.fill { flex: 1; }
.scroll { display: flex; height: 13px; }
.scroll button { width: 13px; flex: none; }
.scroll svg { width: 8px; height: 8px; }
.thumbbar { flex: 136; }
.track { flex: 55; background: #ebe8e3; }
.ring {
  position: absolute;
  left: -3px;
  top: 35px;
  width: 95px;
  height: 33px;
  border: 2px solid #f01818;
  border-radius: 17px;
}

.strip {
  display: flex;
  flex-direction: column;
  width: 22px;
  flex: none;
  padding-top: 2px;
}
.strip .tb { margin-left: 2px; }
.strip .hsep { margin: 2px 1px; }
.endline { height: 2px; margin-top: auto; margin-bottom: 19px; background: #b4b1ab; }

.status {
  display: flex;
  align-items: center;
  height: 23px;
  padding: 0 6px 0 2px;
  border-top: 1px solid #9a978f;
}
.status .vsep { margin: 0 7px 0 auto; height: 17px; }
.s-ruler { width: 19px; height: 10px; }
.s-rgb { width: 16px; height: 9px; margin: 0 10px 0 11px; }
.s-info { width: 12px; height: 12px; }
</style>
